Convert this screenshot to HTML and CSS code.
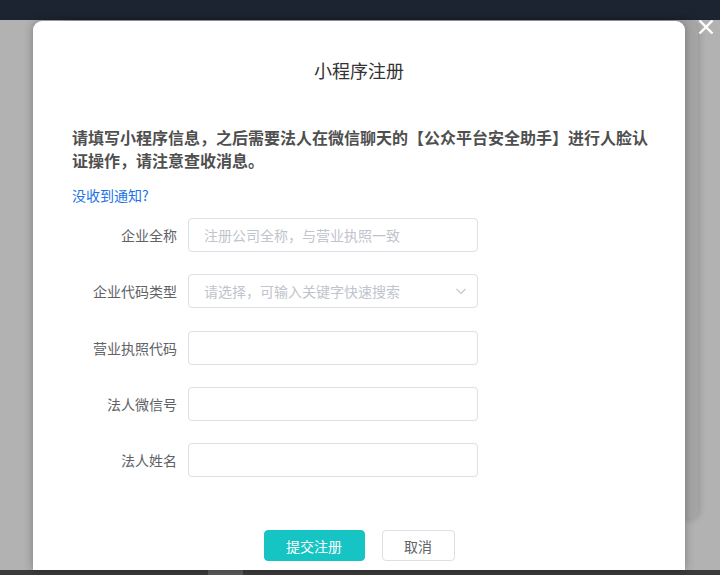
FILE: index.html
```html
<!DOCTYPE html>
<html lang="zh-CN">
<head>
    <meta charset="UTF-8">
    <meta name="viewport" content="width=device-width, initial-scale=1.0">
    <title>小程序注册</title>
    <link rel="stylesheet" href="styles.css">
</head>
<body>

    <div class="topbar"></div>

    <div class="stage">
        <!-- 背后的窗口 -->
        <div class="back-panel"></div>

        <div class="modal">
            <div class="modal-title">小程序注册</div>

            <div class="notice">请填写小程序信息，之后需要法人在微信聊天的【公众平台安全助手】进行人脸认证操作，请注意查收消息。</div>
            <a class="link" href="#">没收到通知?</a>

            <form class="form">
                <div class="form-row">
                    <label class="form-label">企业全称</label>
                    <input class="form-input" type="text" placeholder="注册公司全称，与营业执照一致">
                </div>
                <div class="form-row">
                    <label class="form-label">企业代码类型</label>
                    <div class="select">
                        <input class="form-input" type="text" placeholder="请选择，可输入关键字快速搜索">
                        <svg class="select-arrow" width="12" height="12" viewBox="0 0 12 12">
                            <path d="M1.5 4 L6 8.5 L10.5 4" fill="none" stroke="#c0c4cc" stroke-width="1.1"/>
                        </svg>
                    </div>
                </div>
                <div class="form-row">
                    <label class="form-label">营业执照代码</label>
                    <input class="form-input" type="text">
                </div>
                <div class="form-row">
                    <label class="form-label">法人微信号</label>
                    <input class="form-input" type="text">
                </div>
                <div class="form-row">
                    <label class="form-label">法人姓名</label>
                    <input class="form-input" type="text">
                </div>
            </form>

            <div class="actions">
                <button class="btn btn-primary" type="button">提交注册</button>
                <button class="btn" type="button">取消</button>
            </div>
        </div>

        <svg class="close" width="16" height="14" viewBox="0 0 16 14">
            <path d="M1.5 0.5 L14.5 13.5 M14.5 0.5 L1.5 13.5" stroke="#fff" stroke-width="2.4"/>
        </svg>
    </div>

    <div class="bottombar"><div class="thumb"></div></div>

</body>
</html>
```

FILE: styles.css
```css
body {
    margin: 0;
    width: 720px;
    height: 575px;
    overflow: hidden;
    background-color: #b2b2b2;
    font-family: "Noto Sans CJK SC", "Noto Sans", sans-serif;
}
.topbar {
    height: 20px;
    background-color: #1c2431;
}
.stage {
    position: relative;
    height: 550px;
    display: flex;
}
.back-panel {
    position: absolute;
    top: 0;
    right: 22px;
    width: 640px;
    height: 500px;
    background-color: #a5a5a5;
    border-radius: 10px;
    box-shadow: 2px 0 6px rgba(0, 0, 0, 0.15);
}
.modal {
    position: relative;
    margin: 1px 0 0 33px;
    width: 652px;
    padding: 0 39px;
    box-sizing: border-box;
    background-color: #fff;
    border-radius: 9px 9px 0 0;
    box-shadow: 0 0 10px rgba(0, 0, 0, 0.3);
}
.modal-title {
    padding-top: 37px;
    font-size: 18px;
    line-height: 24px;
    color: #333;
    text-align: center;
}
.notice {
    margin-top: 44px;
    margin-right: -5px;
    font-size: 16px;
    line-height: 23px;
    font-weight: bold;
    color: #4f4f4f;
}
.link {
    display: block;
    margin-top: 13px;
    font-size: 14px;
    line-height: 20px;
    color: #1a73e8;
    text-decoration: none;
}
.form {
    margin-top: 13px;
}
.form-row {
    display: flex;
    align-items: center;
    height: 34px;
    margin-bottom: 22.25px;
}
.form-row:last-child {
    margin-bottom: 0;
}
.form-label {
    width: 116px;
    padding-right: 11px;
    box-sizing: border-box;
    text-align: right;
    font-size: 14px;
    color: #606266;
}
.form-input {
    width: 290px;
    height: 34px;
    box-sizing: border-box;
    padding: 0 15px;
    border: 1px solid #dcdfe6;
    border-radius: 4px;
    font-family: inherit;
    font-size: 14px;
    color: #606266;
    outline: none;
}
.form-input::placeholder {
    color: #c0c4cc;
}
.select {
    position: relative;
}
.select-arrow {
    position: absolute;
    right: 11px;
    top: 11px;
}
.actions {
    display: flex;
    justify-content: center;
    gap: 17px;
    margin-top: 53px;
}
.btn {
    width: 73px;
    height: 31px;
    border: 1px solid #dcdfe6;
    border-radius: 4px;
    background-color: #fff;
    font-family: inherit;
    font-size: 14px;
    color: #606266;
    cursor: pointer;
}
.btn-primary {
    width: 101px;
    border-color: #17c4c4;
    background-color: #17c4c4;
    color: #fff;
}
.close {
    position: absolute;
    top: 0;
    left: 698px;
}
.bottombar {
    height: 5px;
    background-color: #3b3b3b;
}
.thumb {
    margin-left: 208px;
    width: 35px;
    height: 5px;
    background-color: #5a5a5a;
}
```
